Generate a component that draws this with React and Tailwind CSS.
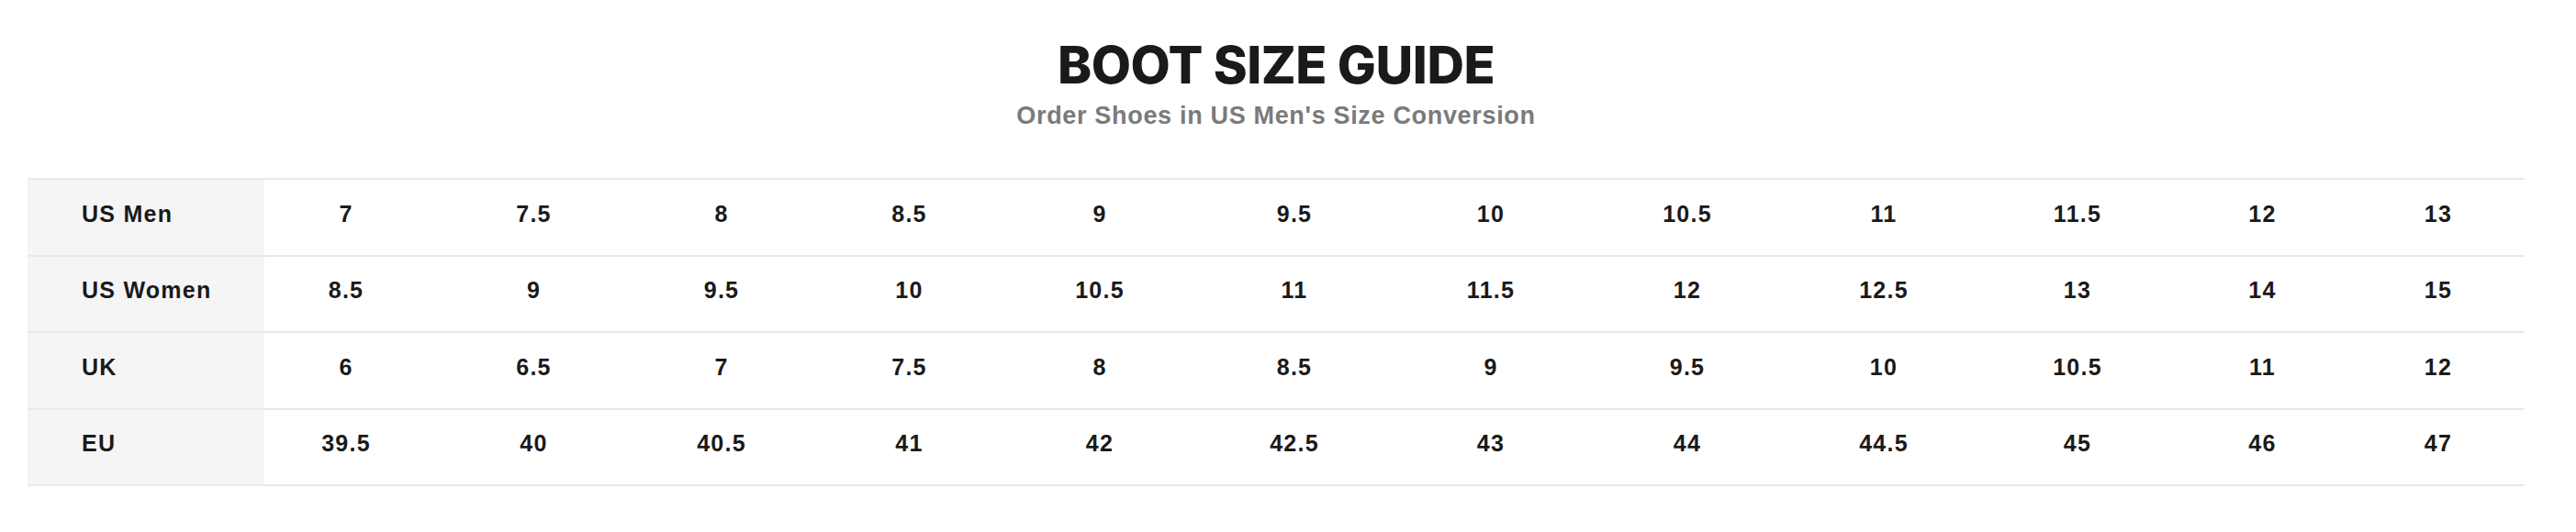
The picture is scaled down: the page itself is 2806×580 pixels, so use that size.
import React from "react";

const rows = [
  ["US Men", ["7", "7.5", "8", "8.5", "9", "9.5", "10", "10.5", "11", "11.5", "12", "13"]],
  ["US Women", ["8.5", "9", "9.5", "10", "10.5", "11", "11.5", "12", "12.5", "13", "14", "15"]],
  ["UK", ["6", "6.5", "7", "7.5", "8", "8.5", "9", "9.5", "10", "10.5", "11", "12"]],
  ["EU", ["39.5", "40", "40.5", "41", "42", "42.5", "43", "44", "44.5", "45", "46", "47"]],
];

export default function App() {
  return (
    <div
      className="w-[2780px] px-[30px] bg-white text-[#1a1a1a]"
      style={{ fontFamily: '"Liberation Sans", Arial, sans-serif' }}
    >
      <div className="pt-[43px] text-center">
        <h1
          className="text-[56px] leading-none font-extrabold tracking-[-0.008em] text-[#1a1a1a]"
          style={{ fontFamily: 'Inter, "Liberation Sans", sans-serif' }}
        >
          BOOT SIZE GUIDE
        </h1>
        <p className="mt-[14px] text-[27px] leading-none font-bold tracking-[0.025em] text-[#7a7a7a]">
          Order Shoes in US Men's Size Conversion
        </p>
      </div>
      <div className="mt-[54px] border-t-2 border-[#e8e8e8]">
        {rows.map(([label, vals]) => (
          <div
            key={label}
            className="grid h-[83.5px] grid-cols-[258px_191px_205px_204px_205px_210px_214px_214px_214px_214px_208px_195px_1fr] border-b-2 border-[#e8e8e8] text-[25px] font-bold tracking-[0.05em]"
          >
            <div className="flex items-center bg-[#f5f5f5] pl-[59px] pb-[7px]">{label}</div>
            {vals.map((v, i) => (
              <div
                key={i}
                className={
                  i === 0
                    ? "flex items-center justify-center pr-[13px] pb-[7px]"
                    : "flex items-center justify-center pb-[7px]"
                }
              >
                {v}
              </div>
            ))}
          </div>
        ))}
      </div>
      <div className="h-[50px]" />
    </div>
  );
}
